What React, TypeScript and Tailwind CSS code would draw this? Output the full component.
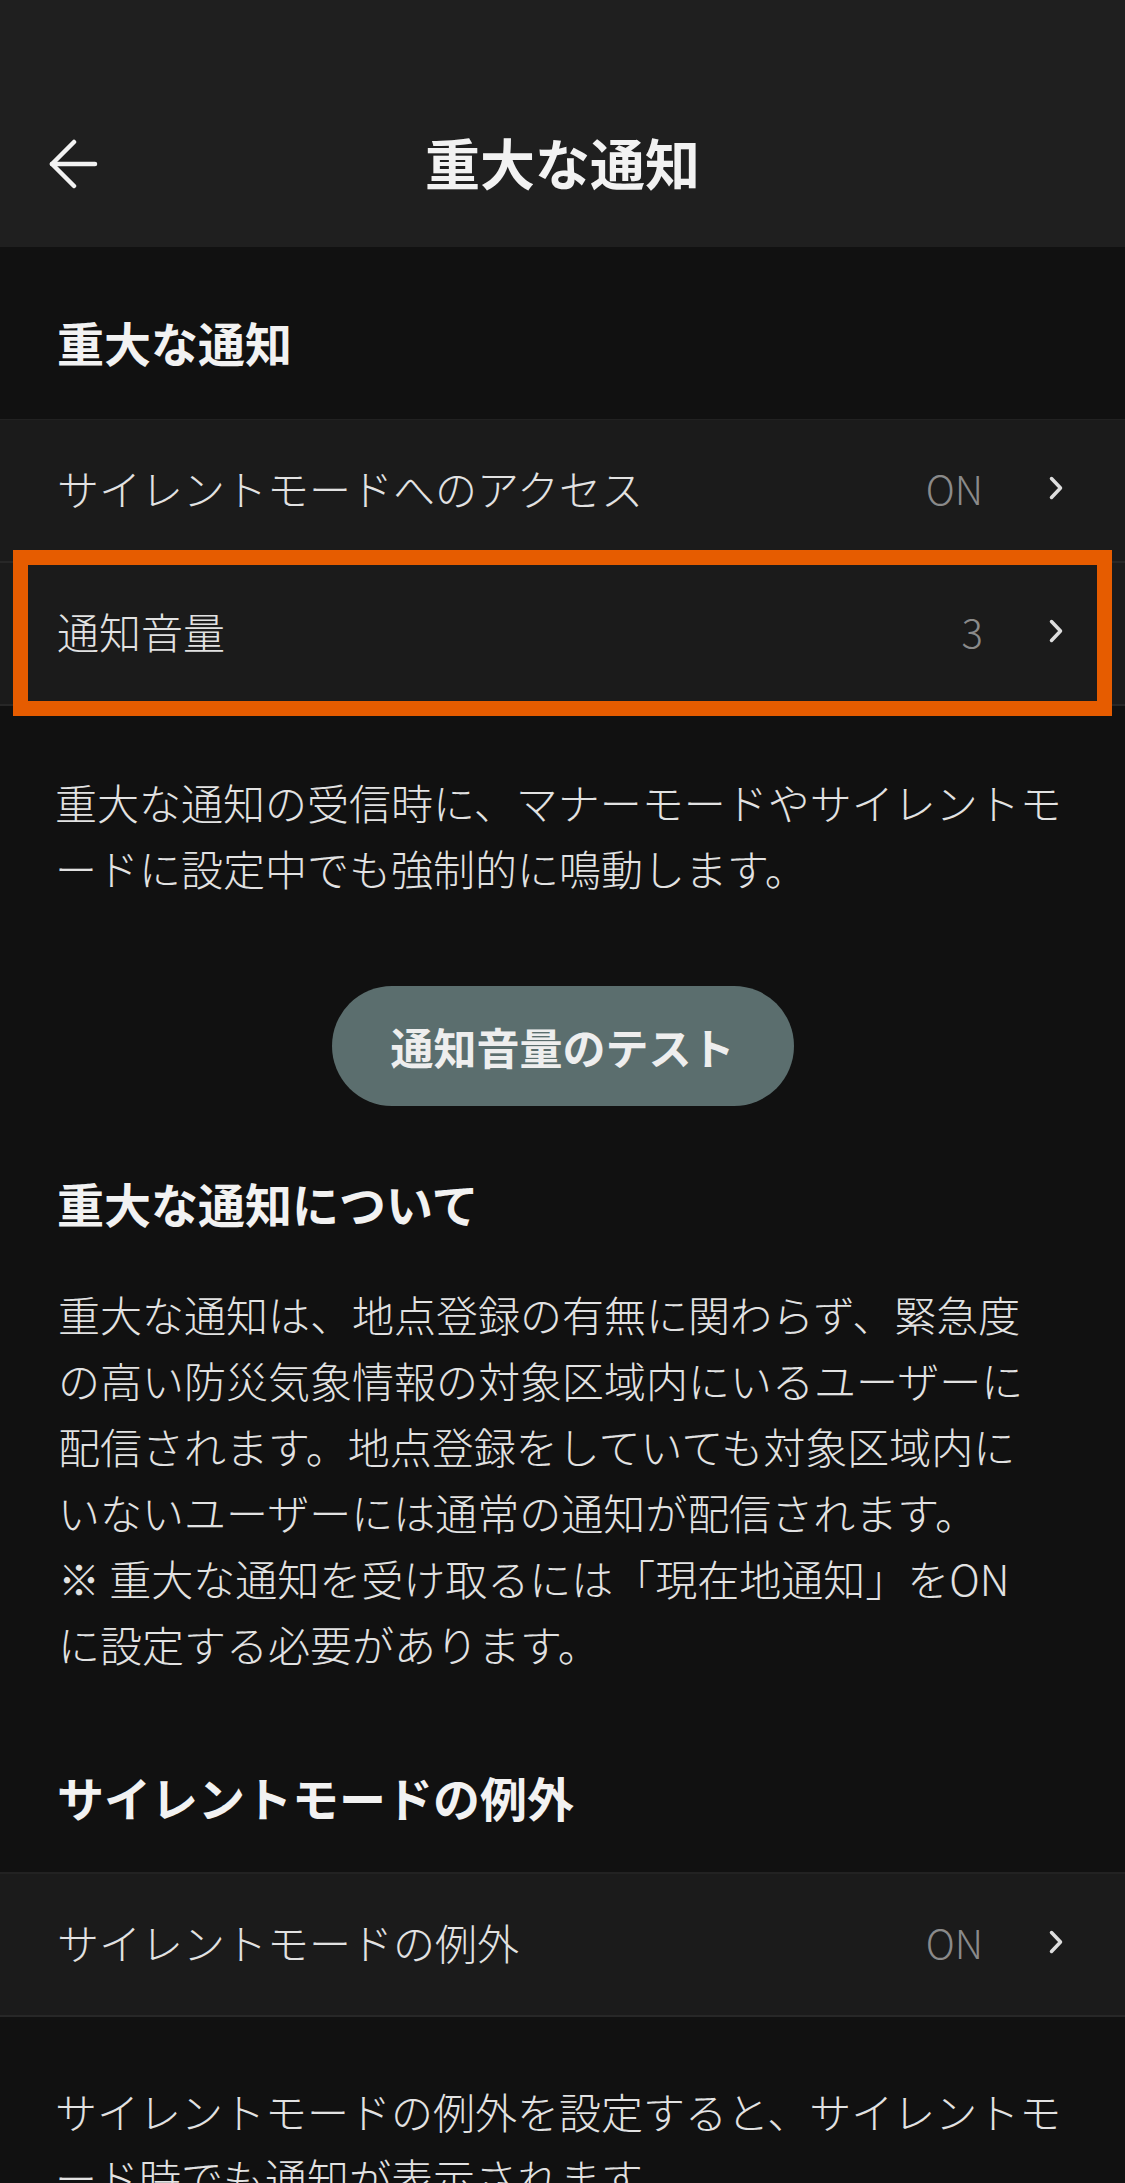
import { ReactNode } from "react";

const FONT = {
  fontFamily: '"Noto Sans CJK JP", "Noto Sans", sans-serif',
};

const BackArrow = () => (
  <svg width="50" height="50" viewBox="0 0 50 50" fill="none" stroke="#f2f2f2" strokeWidth="4.5" strokeLinecap="round" strokeLinejoin="round">
    <path d="M47 25H4" />
    <path d="M26 3 4 25l22 22" />
  </svg>
);

const Chevron = () => (
  <svg width="14" height="24" viewBox="0 0 14 24" fill="none" stroke="#dedede" strokeWidth="3.5" strokeLinecap="round" strokeLinejoin="round" className="ml-[66px] shrink-0">
    <path d="M2.5 2.5 11.5 12l-9 9.5" />
  </svg>
);

interface SettingRowProps {
  label: string;
  value: string;
  children?: ReactNode;
}

const SettingRow = ({ label, value, children }: SettingRowProps) => (
  <div className="relative flex h-[143px] items-center border-b-2 border-[#272727] bg-[#1b1b1b] pb-[6px] pl-[57px] pr-[62px]">
    <span className="flex-1 text-[42px] font-light leading-none text-[#e2e2e2]">{label}</span>
    <span className="text-[40px] font-light leading-none text-[#8a8a8a]">{value}</span>
    <Chevron />
    {children}
  </div>
);

const SectionTitle = ({ children, className }: { children: ReactNode; className?: string }) => (
  <h2 className={`px-[57px] text-[47px] font-bold leading-[64px] text-[#f2f2f2] ${className ?? ""}`}>{children}</h2>
);

const Paragraph = ({ children, className }: { children: ReactNode; className?: string }) => (
  <p className={`text-[42px] font-light leading-[66px] text-[#e2e2e2] [line-break:loose] ${className ?? ""}`}>{children}</p>
);

export default function App() {
  return (
    <div className="min-h-screen w-full overflow-hidden bg-[#111111]" style={FONT}>
      {/* top bar */}
      <header className="h-[247px] bg-[#1f1f1f] pt-[129px]">
        <div className="grid h-[64px] grid-cols-[1fr_auto_1fr] items-center">
          <div className="pl-[48px] pt-[6px]">
            <BackArrow />
          </div>
          <h1 className="text-[55px] font-bold leading-[64px] text-[#f2f2f2]">重大な通知</h1>
          <div />
        </div>
      </header>

      <SectionTitle className="pb-[45px] pt-[63px]">重大な通知</SectionTitle>

      <div className="border-t border-[#222222]">
        <SettingRow label="サイレントモードへのアクセス" value="ON" />
        <SettingRow label="通知音量" value="3">
          <div className="pointer-events-none absolute -bottom-[12px] -top-[13px] left-[13px] right-[13px] border-[15px] border-[#e65c00]" />
        </SettingRow>
      </div>

      <Paragraph className="mt-[63px] pl-[55px] pr-[50px]">
        重大な通知の受信時に、マナーモードやサイレントモードに設定中でも強制的に鳴動します。
      </Paragraph>

      <div className="mt-[85px] flex justify-center">
        <button className="h-[120px] w-[462px] rounded-full bg-[#5b6e6e] text-[43px] font-bold text-[#eeeeee]">
          通知音量のテスト
        </button>
      </div>

      <SectionTitle className="mt-[65px]">重大な通知について</SectionTitle>

      <Paragraph className="mt-[46px] pl-[58px] pr-[80px]">
        重大な通知は、地点登録の有無に関わらず、緊急度の高い防災気象情報の対象区域内にいるユーザーに配信されます。地点登録をしていても対象区域内にいないユーザーには通常の通知が配信されます。
        <br />
        ※ 重大な通知を受け取るには「現在地通知」をONに設定する必要があります。
      </Paragraph>

      <SectionTitle className="mt-[88px] pb-[43px]">サイレントモードの例外</SectionTitle>

      <div className="border-t-2 border-[#222222]">
        <SettingRow label="サイレントモードの例外" value="ON" />
      </div>

      <Paragraph className="mt-[61px] pb-[40px] pl-[55px] pr-[50px]">
        サイレントモードの例外を設定すると、サイレントモード時でも通知が表示されます。
      </Paragraph>
    </div>
  );
}
